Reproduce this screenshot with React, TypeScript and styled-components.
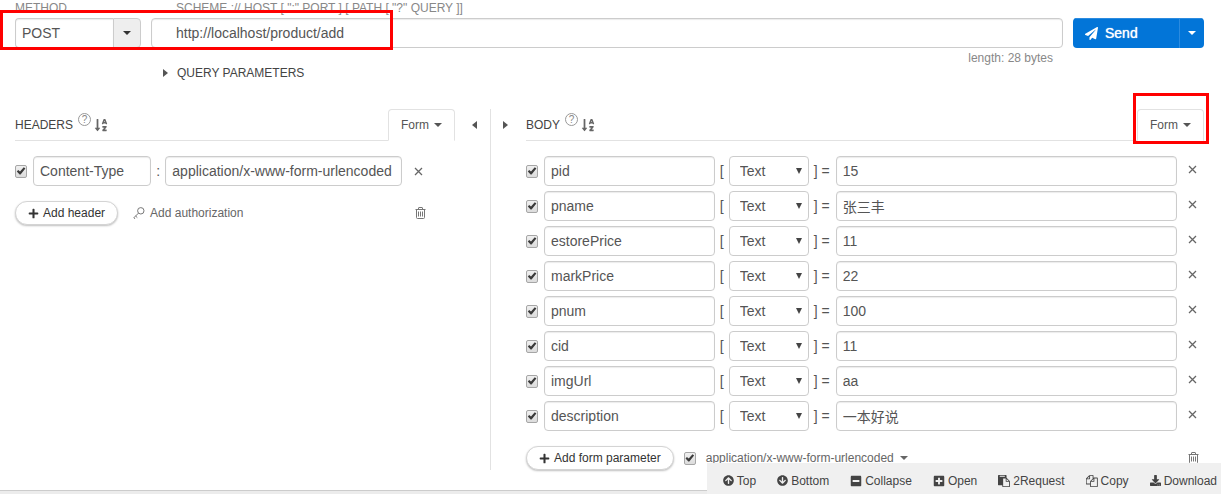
import React from "react";
import styled, { createGlobalStyle } from "styled-components";
import {
  FaArrowCircleDown,
  FaArrowCircleUp,
  FaDownload,
  FaMinusSquare,
  FaPaperPlane,
  FaPlus,
  FaPlusSquare,
  FaSortAlphaDown,
} from "react-icons/fa";

const GlobalStyle = createGlobalStyle`
  *, *::before, *::after { box-sizing: border-box; }
  body {
    margin: 0;
    background: #ececec;
    color: #555;
    font: 12px/16px "Liberation Sans", Arial, "Noto Sans CJK SC", sans-serif;
  }
  button, input, select { font: inherit; color: inherit; margin: 0; }
  button { cursor: pointer; }
  svg { display: block; flex: none; }
`;

/* Shared parts */

const TextInput = styled.input`
  min-width: 0;
  width: 100%;
  height: 30px;
  padding: 0 6px;
  border: 1px solid #ccc;
  border-radius: 4px;
  background: #fff;
  box-shadow: inset 0 1px 1px rgba(0, 0, 0, 0.08);
  font-size: 14px;
  line-height: 20px;
`;

const Checkbox = styled.input.attrs({ type: "checkbox" })`
  appearance: none;
  flex: none;
  display: grid;
  place-items: center;
  width: 12px;
  height: 13px;
  border: 1px solid #a6a6a6;
  border-radius: 2px;
  background: linear-gradient(#f0f0f0, #dcdcdc);

  &:checked::before {
    content: "";
    width: 10px;
    height: 10px;
    background: #3c3c3c;
    clip-path: polygon(8% 54%, 22% 40%, 40% 56%, 78% 12%, 94% 26%, 46% 86%, 36% 84%);
  }
`;

const Caret = styled.span`
  flex: none;
  border: 4px solid transparent;
  border-top-color: currentColor;
  border-bottom: 0;
`;

const SideArrow = styled.span<{ $left?: boolean }>`
  flex: none;
  color: #555;
  border: 4px solid transparent;
  border-left: ${(p) => (p.$left ? "0" : "5px solid currentColor")};
  border-right: ${(p) => (p.$left ? "5px solid currentColor" : "0")};
`;

const PlainButton = styled.button`
  display: flex;
  align-items: center;
  padding: 0;
  border: 0;
  background: none;
`;

const PillButton = styled.button`
  display: flex;
  align-items: center;
  gap: 4px;
  height: 24px;
  padding: 0 12px;
  border: 1px solid #d4d4d4;
  border-radius: 12px;
  background: #fff;
  box-shadow: 0 1px 2px rgba(0, 0, 0, 0.25);
  color: #333;
  white-space: nowrap;
`;

/* Request line */

const Card = styled.main`
  position: relative;
  padding-bottom: 20px;
  border-bottom: 1px solid #ccc;
  background: #fff;
  box-shadow: 0 1px 2px rgba(0, 0, 0, 0.15);
`;

const RequestLine = styled.form`
  display: grid;
  grid-template-columns: 126px minmax(0, 1fr) 131px;
  column-gap: 10px;
  align-items: start;
  padding: 0 17px 0 15px;
`;

const FieldLabel = styled.label<{ $indent?: boolean }>`
  height: 18px;
  padding-left: ${(p) => (p.$indent ? "25px" : "0")};
  color: #888;
`;

const MethodBox = styled.div`
  grid-column: 1;
  display: flex;
`;

const MethodInput = styled(TextInput)`
  border-right: 0;
  border-radius: 4px 0 0 4px;
`;

const MethodToggle = styled.button`
  flex: none;
  display: grid;
  place-items: center;
  width: 28px;
  height: 30px;
  padding: 0;
  border: 1px solid #ccc;
  border-radius: 0 4px 4px 0;
  background: #eee;
  color: #333;
`;

const UrlInput = styled(TextInput)`
  padding-left: 24px;
`;

const SendGroup = styled.div`
  display: flex;
  height: 30px;
  border-radius: 4px;
  overflow: hidden;
  background: #0275d8;
  color: #fff;
`;

const SendButton = styled(PlainButton)`
  flex: 1;
  gap: 7px;
  padding-left: 12px;
  box-shadow: inset 0 1px 0 #2b8be0;
  font-size: 14px;
  text-shadow: 0 0 1px #fff;
`;

const SendToggle = styled(PlainButton)`
  width: 25px;
  justify-content: center;
  border-left: 1px solid #2b8be0;
  box-shadow: inset 0 1px 0 #2b8be0;
`;

const UrlLength = styled.div`
  grid-column: 2;
  padding: 2px 10px 0 0;
  color: #888;
  text-align: right;
`;

const QueryToggle = styled(PlainButton)`
  grid-column: 2;
  gap: 9px;
  margin: -1px 0 0;
  padding-left: 12px;
  color: #444;
`;

/* Panels */

const Panels = styled.div`
  display: grid;
  grid-template-columns: minmax(0, 491fr) minmax(0, 730fr);
  margin-top: 28px;
`;

const HeadersPanel = styled.section`
  display: grid;
  grid-template-columns: minmax(0, 1fr) 35px;
  align-content: start;
  padding-left: 15px;
  border-right: 1px solid #e2e2e2;
`;

const BodyPanel = styled.section`
  display: grid;
  grid-template-columns: 35px minmax(0, 1fr);
  align-content: start;
  padding-right: 17px;
`;

const CollapseButton = styled(PlainButton)<{ $left?: boolean }>`
  height: 32px;
  align-self: start;
  padding-left: ${(p) => (p.$left ? "17px" : "12px")};
`;

const PanelHead = styled.header`
  display: flex;
  height: 32px;
  border-bottom: 1px solid #e2e2e2;
`;

const PanelTitle = styled.h2`
  margin: 0;
  color: #444;
  font-size: 12px;
  font-weight: normal;
  line-height: 32px;
`;

const HelpButton = styled.button`
  width: 13px;
  height: 13px;
  margin: 4px 3px 0 5px;
  padding: 0;
  border: 1px solid #999;
  border-radius: 50%;
  background: none;
  color: #888;
  font-size: 10px;
  line-height: 10px;
`;

const SortButton = styled(PlainButton)`
  height: 32px;
`;

const FormTab = styled(PlainButton)`
  gap: 5px;
  height: 32px;
  margin-left: auto;
  padding: 0 12px;
  border: 1px solid #e2e2e2;
  border-bottom-color: #fff;
  border-radius: 4px 4px 0 0;
  background: #fff;
`;

const Rows = styled.div`
  display: grid;
  gap: 5px;
  padding-top: 15px;
`;

const HeaderRow = styled.div`
  display: grid;
  grid-template-columns: 18px minmax(0, 1fr) 14px minmax(0, 2fr) 53px;
  align-items: center;
`;

const ParamRow = styled.div`
  display: grid;
  grid-template-columns: 18px minmax(0, 1fr) 14px 80px 27px minmax(0, 2fr) 27px;
  align-items: center;
`;

const Mark = styled.span`
  padding-left: 5px;
  font-size: 14px;
  line-height: 30px;
`;

const SelectBox = styled.span`
  display: grid;
  align-items: center;
`;

const TypeSelect = styled.select`
  grid-area: 1 / 1;
  appearance: none;
  height: 30px;
  padding: 0 10px;
  border: 1px solid #ccc;
  border-radius: 4px;
  background: #fff;
  font-size: 14px;
`;

const SelectArrow = styled.span`
  grid-area: 1 / 1;
  justify-self: end;
  margin-right: 7px;
  border: 3px solid transparent;
  border-top: 6px solid #444;
  border-bottom: 0;
  pointer-events: none;
`;

const RemoveButton = styled(PlainButton)<{ $inset: number; $lift?: number }>`
  justify-self: start;
  margin-left: ${(p) => p.$inset}px;
  padding-bottom: ${(p) => p.$lift ?? 0}px;
`;

const PanelFoot = styled.footer<{ $gap: number }>`
  display: flex;
  align-items: center;
  gap: ${(p) => p.$gap}px;
  padding-top: 15px;
  color: #666;
`;

const AuthButton = styled(PlainButton)`
  gap: 5px;
`;

const EncodingButton = styled(PlainButton)`
  gap: 6px;
`;

const TrashButton = styled(PlainButton)<{ $end: number }>`
  margin-left: auto;
  margin-right: ${(p) => p.$end}px;
`;

/* Bottom tools and highlights */

const ToolBar = styled.nav`
  position: fixed;
  right: 0;
  bottom: 0;
  display: flex;
  align-items: center;
  gap: 21px;
  height: 31px;
  padding: 4px 4px 0 16px;
  background: #f0f0f0;
`;

const ToolButton = styled(PlainButton)`
  gap: 3px;
  color: #444;
  white-space: nowrap;
`;

const Highlight = styled.span`
  position: absolute;
  border: 3px solid #f00;
  pointer-events: none;
`;

const UrlHighlight = styled(Highlight)`
  top: 10px;
  left: 0;
  width: 393px;
  height: 40px;
`;

const FormHighlight = styled(Highlight)`
  top: 93px;
  right: 12px;
  width: 76px;
  height: 51px;
`;

/* Icons */

const CrossIcon = () => (
  <svg width="9" height="9" viewBox="0 0 9 9" fill="none" stroke="#666" strokeWidth="1.3">
    <path d="M1 1l7 7M8 1L1 8" />
  </svg>
);

const TrashIcon = () => (
  <svg width="11" height="12" viewBox="0 0 11 12" fill="none" stroke="#777">
    <path d="M0.5 2.5h10M3.5 2.5v-1.500q0-.5.5-.5h3q.5 0 .5.5v1.500M1.500 2.500v8q0 1 1 1h6q1 0 1-1v-8M3.500 4.500v5M5.500 4.500v5M7.500 4.500v5" />
  </svg>
);

const KeyIcon = () => (
  <svg width="12" height="12" viewBox="0 0 12 12" fill="none" stroke="#777">
    <circle cx="7.8" cy="3.8" r="3.2" />
    <path d="M5.5 6.1L.8 10.8M.8 10.8l1.4 1M2.6 9l1.7 1.6" />
  </svg>
);

const PasteIcon = () => (
  <svg width="12" height="12" viewBox="0 0 1792 1792" fill="currentColor">
    <path d="M768 1664h896v-640h-416q-40 0-68-28t-28-68v-416h-384v1152zm256-1440v-64q0-13-9.500-22.500t-22.500-9.500h-704q-13 0-22.500 9.500t-9.500 22.500v64q0 13 9.500 22.500t22.500 9.500h704q13 0 22.500-9.500t9.500-22.500zm256 672h299l-299-299v299zm512 128v672q0 40-28 68t-68 28h-960q-40 0-68-28t-28-68v-160h-544q-40 0-68-28t-28-68v-1344q0-40 28-68t68-28h1088q40 0 68 28t28 68v328q21 13 36 28l408 408q28 28 48 76t20 88z" />
  </svg>
);

const CopyIcon = () => (
  <svg width="12" height="12" viewBox="0 0 1792 1792" fill="currentColor">
    <path d="M1664 384q40 0 68 28t28 68v1216q0 40-28 68t-68 28h-960q-40 0-68-28t-28-68v-288h-544q-40 0-68-28t-28-68v-672q0-40 20-88t48-76l408-408q28-28 76-48t88-20h416q40 0 68 28t28 68v328q68-40 128-40h416zm-544 213l-299 299h299v-299zm-640-384l-299 299h299v-299zm196 647l316-316v-416h-384v416q0 40-28 68t-68 28h-416v640h512v-256q0-40 20-88t48-76zm956 804v-1152h-384v416q0 40-28 68t-68 28h-416v640h896z" />
  </svg>
);

const params = [
  ["pid", "15"],
  ["pname", "张三丰"],
  ["estorePrice", "11"],
  ["markPrice", "22"],
  ["pnum", "100"],
  ["cid", "11"],
  ["imgUrl", "aa"],
  ["description", "一本好说"],
];

function PanelHeading({ title }: { title: string }) {
  return (
    <PanelHead>
      <PanelTitle>{title}</PanelTitle>
      <HelpButton type="button" aria-label={`${title} help`}>?</HelpButton>
      <SortButton type="button" aria-label={`Sort ${title}`}>
        <FaSortAlphaDown size={14} color="#666" />
      </SortButton>
      <FormTab type="button">
        Form <Caret />
      </FormTab>
    </PanelHead>
  );
}

function FormParam({ name, value }: { name: string; value: string }) {
  return (
    <ParamRow>
      <Checkbox defaultChecked aria-label={`Use ${name}`} />
      <TextInput defaultValue={name} aria-label="Parameter name" />
      <Mark>[</Mark>
      <SelectBox>
        <TypeSelect aria-label={`Type of ${name}`} defaultValue="Text">
          <option>Text</option>
          <option>File</option>
        </TypeSelect>
        <SelectArrow />
      </SelectBox>
      <Mark>] =</Mark>
      <TextInput defaultValue={value} aria-label={`Value of ${name}`} />
      <RemoveButton type="button" $inset={11} $lift={3} aria-label={`Remove ${name}`}>
        <CrossIcon />
      </RemoveButton>
    </ParamRow>
  );
}

export default function App() {
  return (
    <>
      <GlobalStyle />
      <Card>
        <RequestLine onSubmit={(e) => e.preventDefault()}>
          <FieldLabel htmlFor="method">METHOD</FieldLabel>
          <FieldLabel htmlFor="url" $indent>
            SCHEME :// HOST [ ":" PORT ] [ PATH [ "?" QUERY ]]
          </FieldLabel>
          <MethodBox>
            <MethodInput id="method" defaultValue="POST" />
            <MethodToggle type="button" aria-label="Choose method">
              <Caret />
            </MethodToggle>
          </MethodBox>
          <UrlInput id="url" defaultValue="http://localhost/product/add" />
          <SendGroup>
            <SendButton type="submit">
              <FaPaperPlane size={13} />
              Send
            </SendButton>
            <SendToggle type="button" aria-label="More send options">
              <Caret />
            </SendToggle>
          </SendGroup>
          <UrlLength>length: 28 bytes</UrlLength>
          <QueryToggle type="button">
            <SideArrow />
            QUERY PARAMETERS
          </QueryToggle>
        </RequestLine>

        <Panels>
          <HeadersPanel>
            <PanelHeading title="HEADERS" />
            <CollapseButton type="button" $left aria-label="Collapse headers">
              <SideArrow $left />
            </CollapseButton>
            <Rows>
              <HeaderRow>
                <Checkbox defaultChecked aria-label="Use Content-Type" />
                <TextInput defaultValue="Content-Type" aria-label="Header name" />
                <Mark>:</Mark>
                <TextInput defaultValue="application/x-www-form-urlencoded" aria-label="Header value" />
                <RemoveButton type="button" $inset={12} aria-label="Remove header">
                  <CrossIcon />
                </RemoveButton>
              </HeaderRow>
            </Rows>
            <div />
            <PanelFoot $gap={15}>
              <PillButton type="button">
                <FaPlus size={11} />
                Add header
              </PillButton>
              <AuthButton type="button">
                <KeyIcon />
                Add authorization
              </AuthButton>
              <TrashButton type="button" $end={29} aria-label="Delete all headers">
                <TrashIcon />
              </TrashButton>
            </PanelFoot>
          </HeadersPanel>

          <BodyPanel>
            <CollapseButton type="button" aria-label="Collapse body">
              <SideArrow />
            </CollapseButton>
            <PanelHeading title="BODY" />
            <div />
            <Rows>
              {params.map(([name, value]) => (
                <FormParam key={name} name={name} value={value} />
              ))}
            </Rows>
            <div />
            <PanelFoot $gap={10}>
              <PillButton type="button">
                <FaPlus size={11} />
                Add form parameter
              </PillButton>
              <Checkbox defaultChecked aria-label="Use encoding" />
              <EncodingButton type="button">
                application/x-www-form-urlencoded <Caret />
              </EncodingButton>
              <TrashButton type="button" $end={5} aria-label="Delete all parameters">
                <TrashIcon />
              </TrashButton>
            </PanelFoot>
          </BodyPanel>
        </Panels>

        <UrlHighlight />
        <FormHighlight />
      </Card>

      <ToolBar>
        <ToolButton type="button"><FaArrowCircleUp size={11} />Top</ToolButton>
        <ToolButton type="button"><FaArrowCircleDown size={11} />Bottom</ToolButton>
        <ToolButton type="button"><FaMinusSquare size={12} />Collapse</ToolButton>
        <ToolButton type="button"><FaPlusSquare size={12} />Open</ToolButton>
        <ToolButton type="button"><PasteIcon />2Request</ToolButton>
        <ToolButton type="button"><CopyIcon />Copy</ToolButton>
        <ToolButton type="button"><FaDownload size={11} />Download</ToolButton>
      </ToolBar>
    </>
  );
}
